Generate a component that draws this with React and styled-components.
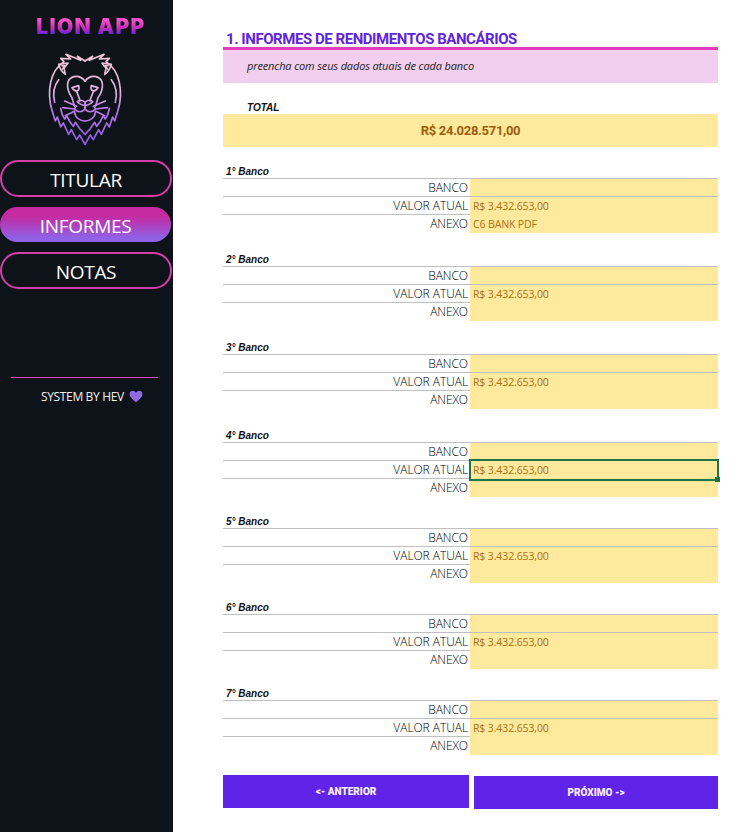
import React from 'react';
import styled, { createGlobalStyle } from 'styled-components';

const GlobalStyle = createGlobalStyle`
  html, body {
    margin: 0;
    padding: 0;
    background: #fff;
  }
`;

const Page = styled.div`
  display: flex;
  width: 751px;
  height: 832px;
  overflow: hidden;
  font-family: 'Open Sans', 'Liberation Sans', sans-serif;
`;

const Sidebar = styled.aside`
  width: 173px;
  flex: none;
  background: #0d1318;
  display: flex;
  flex-direction: column;
  align-items: flex-start;
`;

const AppName = styled.div`
  width: 100%;
  margin: 16px 0 0 0;
  padding-left: 9px;
  box-sizing: border-box;
  text-align: center;
  font-family: Inter, 'Liberation Sans', sans-serif;
  font-weight: 900;
  font-size: 21px;
  line-height: 22px;
  letter-spacing: 1.3px;
  background: linear-gradient(180deg, #f550cc 20%, #c52fb8 55%, #5a26dc 85%);
  -webkit-background-clip: text;
  background-clip: text;
  color: transparent;
`;

const LogoWrap = styled.div`
  width: 100%;
  display: flex;
  justify-content: center;
  margin: 7px 0 10px;
  padding-right: 3px;
  box-sizing: border-box;
`;

const Nav = styled.nav`
  display: flex;
  flex-direction: column;
  gap: 10px;
  width: 172px;
`;

const NavButton = styled.div`
  box-sizing: border-box;
  width: ${p => (p.$active ? '171px' : '172px')};
  height: ${p => (p.$active ? '35px' : '37px')};
  padding-top: 3px;
  border-radius: 19px;
  border: ${p => (p.$active ? 'none' : '2px solid #d23fa9')};
  background: ${p => (p.$active ? 'linear-gradient(180deg, #c52a9f 25%, #8f62e8 90%)' : 'transparent')};
  color: #fff;
  display: flex;
  align-items: center;
  justify-content: center;
  font-size: 19px;
  font-weight: 400;
  letter-spacing: -0.3px;
`;

const Divider = styled.div`
  width: 147px;
  height: 1px;
  background: #e04ab8;
  margin: 88px 0 0 11px;
`;

const Credit = styled.div`
  display: flex;
  align-items: center;
  gap: 5px;
  margin: 10px 0 0 41px;
  font-size: 12px;
  line-height: 17px;
  letter-spacing: -0.35px;
  color: #f2f2f2;
`;

const Main = styled.main`
  flex: 1;
  padding: 30px 33px 0 50px;
  display: flex;
  flex-direction: column;
`;

const Title = styled.h1`
  margin: 0;
  height: 17px;
  padding-left: 3px;
  font-family: Roboto, sans-serif;
  font-weight: 700;
  font-size: 15px;
  line-height: 19px;
  letter-spacing: -0.45px;
  white-space: nowrap;
  color: #6024e0;
`;

const TitleRule = styled.div`
  height: 3px;
  background: #e03cbc;
`;

const Hint = styled.div`
  height: 33px;
  background: #f2cfee;
  padding-left: 24px;
  display: flex;
  align-items: center;
  font-style: italic;
  font-size: 11px;
  letter-spacing: -0.14px;
  color: #222;
  padding-bottom: 2px;
  box-sizing: border-box;
`;

const TotalLabel = styled.div`
  margin: 18px 0 0 24px;
  height: 13px;
  font-family: 'Liberation Sans', sans-serif;
  font-weight: 700;
  font-style: italic;
  font-size: 10px;
  line-height: 13px;
  color: #111;
`;

const TotalValue = styled.div`
  height: 33px;
  background: #fee99c;
  display: flex;
  align-items: center;
  justify-content: center;
  font-family: Roboto, sans-serif;
  font-weight: 700;
  font-size: 13px;
  letter-spacing: -0.3px;
  color: #9c5d0e;
`;

const Bank = styled.section`
  margin-top: ${p => p.$gap}px;
`;

const BankTitle = styled.div`
  height: 14px;
  padding-left: 3px;
  font-family: 'Liberation Sans', sans-serif;
  font-weight: 700;
  font-style: italic;
  font-size: 10px;
  line-height: 15px;
  color: #111;
`;

const Row = styled.div`
  display: grid;
  grid-template-columns: 247px 248px;
  height: ${p => (p.$last ? '19px' : '18px')};
  box-sizing: border-box;
  border-top: 1px solid #bfbfbf;
`;

const RowLabel = styled.div`
  text-align: right;
  padding-right: 2px;
  font-size: 12px;
  font-weight: 300;
  line-height: 17px;
  letter-spacing: -0.05px;
  color: #000;
`;

const RowValue = styled.div`
  position: relative;
  background: #fee99c;
  padding-left: 3px;
  font-size: 10.5px;
  line-height: 18px;
  letter-spacing: -0.12px;
  color: #b06f15;
`;

const Selection = styled.div`
  position: absolute;
  z-index: 1;
  left: -1px;
  top: -2px;
  right: -1px;
  bottom: -2px;
  border: 2px solid #217346;
  pointer-events: none;

  &::after {
    content: '';
    position: absolute;
    right: -3px;
    bottom: -3px;
    width: 5px;
    height: 5px;
    background: #217346;
  }
`;

const Actions = styled.div`
  display: flex;
  align-items: flex-start;
  gap: 5px;
  margin-top: 20px;
`;

const ActionButton = styled.div`
  width: ${p => p.$width}px;
  height: 33px;
  margin-top: ${p => p.$offset || 0}px;
  background: #6024e8;
  color: #fbeefc;
  display: flex;
  align-items: center;
  justify-content: center;
  font-family: Roboto, sans-serif;
  font-weight: 900;
  font-size: 10px;
`;

const half = (
  <>
    {/* juba */}
    <path d="M135 48 L112 34 L122 46 L78 28 L92 42 L62 40 L72 50 C54 62 38 84 32 112 C26 140 28 170 36 196 L46 228 L52 216 L62 246 L70 234 L86 268 L94 254 L110 284 L119 270 L135 298" />
    <path d="M56 58 L84 54 L72 70 L76 88 C66 82 60 72 56 58 Z" />
    <path d="M66 62 L74 62 L68 72" />
    <path d="M56 104 C42 122 38 148 44 172" />
    <path d="M62 190 C64 204 68 214 74 222 L80 212 C86 226 92 236 100 244 L106 232 L120 252 L135 268" />
    {/* rosto */}
    <path d="M135 108 C120 90 98 90 86 106 C78 122 86 146 96 158 C100 172 102 180 106 188" />
    <path d="M96 128 L116 122 C118 130 118 136 110 138 C104 138 100 134 96 128 Z" />
    <path d="M110 140 C114 150 118 158 120 168" />
    <path d="M135 182 L135 192 M112 170 C122 162 128 166 135 172 L135 182 C128 180 118 178 112 170 Z" />
    <path d="M135 192 C126 204 112 202 104 192" />
    <path d="M104 202 C106 220 122 228 135 228" />
    {/* bigodes */}
    <path d="M110 184 L74 168 M104 192 L68 188 M104 198 L76 212" />
  </>
);

const LionLogo = () => (
  <svg width="90" height="105" viewBox="0 0 270 315" fill="none" strokeWidth="5" strokeLinejoin="round" strokeLinecap="round">
    <defs>
      <linearGradient id="lionStroke" gradientUnits="userSpaceOnUse" x1="0" y1="25" x2="0" y2="300">
        <stop offset="0" stopColor="#f2c9d6" />
        <stop offset="0.45" stopColor="#e0aedd" />
        <stop offset="0.6" stopColor="#b97ce8" />
        <stop offset="1" stopColor="#8d55e8" />
      </linearGradient>
    </defs>
    <g stroke="url(#lionStroke)">
      <g>{half}</g>
      <g transform="translate(270 0) scale(-1 1)">{half}</g>
    </g>
  </svg>
);

const Heart = () => (
  <svg width="14" height="13" viewBox="0 0 24 22">
    <path d="M12 21 C5 15 1 11 1 6.5 C1 3 3.6 1 6.5 1 C8.8 1 10.8 2.2 12 4.4 C13.2 2.2 15.2 1 17.5 1 C20.4 1 23 3 23 6.5 C23 11 19 15 12 21 Z" fill="#8f6ce0" />
  </svg>
);

const banks = [
  { name: '1° Banco', gap: 17, anexo: 'C6 BANK PDF' },
  { name: '2° Banco', gap: 19 },
  { name: '3° Banco', gap: 19 },
  { name: '4° Banco', gap: 19, selected: true },
  { name: '5° Banco', gap: 17 },
  { name: '6° Banco', gap: 17 },
  { name: '7° Banco', gap: 17 },
];

const App = () => (
  <Page>
    <GlobalStyle />
    <Sidebar>
      <AppName>LION APP</AppName>
      <LogoWrap>
        <LionLogo />
      </LogoWrap>
      <Nav>
        <NavButton>TITULAR</NavButton>
        <NavButton $active>INFORMES</NavButton>
        <NavButton>NOTAS</NavButton>
      </Nav>
      <Divider />
      <Credit>
        SYSTEM BY HEV <Heart />
      </Credit>
    </Sidebar>
    <Main>
      <Title>1. INFORMES DE RENDIMENTOS BANCÁRIOS</Title>
      <TitleRule />
      <Hint>preencha com seus dados atuais de cada banco</Hint>
      <TotalLabel>TOTAL</TotalLabel>
      <TotalValue>R$ 24.028.571,00</TotalValue>
      {banks.map(bank => (
        <Bank key={bank.name} $gap={bank.gap}>
          <BankTitle>{bank.name}</BankTitle>
          <Row>
            <RowLabel>BANCO</RowLabel>
            <RowValue />
          </Row>
          <Row>
            <RowLabel>VALOR ATUAL</RowLabel>
            <RowValue>
              R$ 3.432.653,00
              {bank.selected && <Selection />}
            </RowValue>
          </Row>
          <Row $last>
            <RowLabel>ANEXO</RowLabel>
            <RowValue>{bank.anexo}</RowValue>
          </Row>
        </Bank>
      ))}
      <Actions>
        <ActionButton $width={246}>&lt;- ANTERIOR</ActionButton>
        <ActionButton $width={244} $offset={1}>PRÓXIMO -&gt;</ActionButton>
      </Actions>
    </Main>
  </Page>
);

export default App;
